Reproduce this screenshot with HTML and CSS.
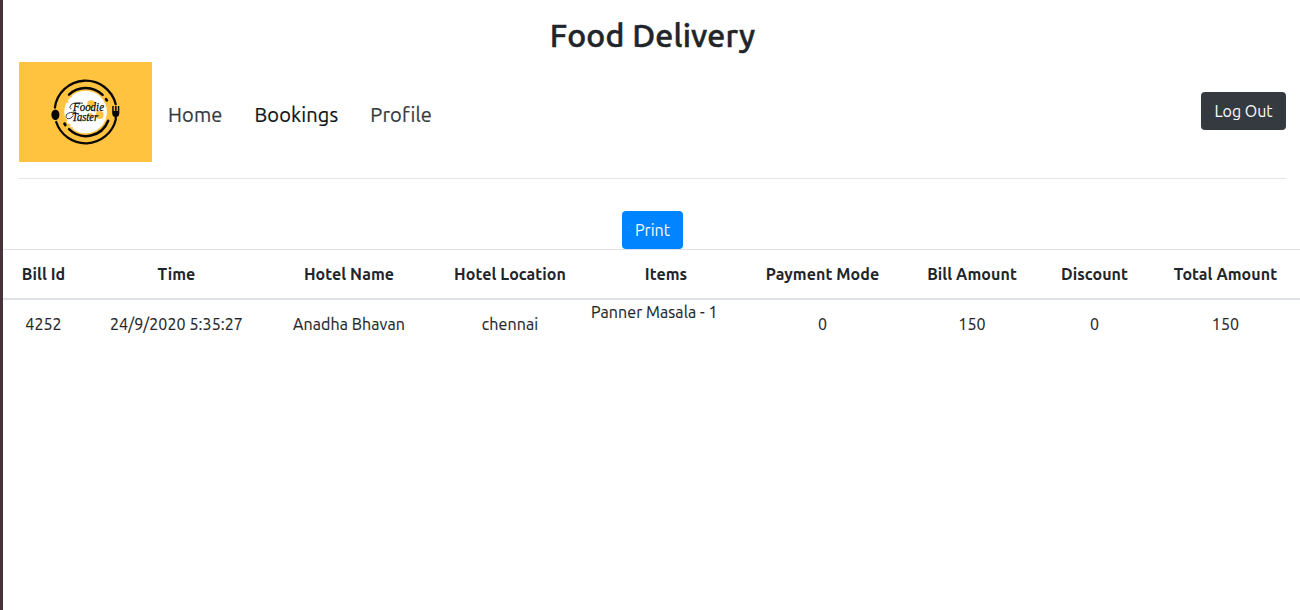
FILE: index.html
```html
<!DOCTYPE html>
<html lang="en">
<head>
<meta charset="utf-8">
<title>Food Delivery</title>
<link rel="stylesheet" href="styles.css">
</head>
<body>
<h2 class="title">Food Delivery</h2>
<header class="navbar">
  <svg class="logo" viewBox="19 62 133 100" role="img" aria-label="Foodie Taster">
    <rect x="19" y="62" width="133" height="100" fill="#ffc340"/>
    <circle cx="85.6" cy="112" r="21.3" fill="#fff"/>
    <g fill="#ffc340">
      <circle cx="91.3" cy="104.2" r="4"/><circle cx="99.6" cy="115" r="4"/><circle cx="90.3" cy="115.5" r="2.4"/>
      <circle cx="68" cy="98" r="1.5"/><circle cx="71" cy="96.5" r="1"/><circle cx="67.5" cy="102" r="1"/>
      <circle cx="69" cy="125" r="1.6"/><circle cx="66" cy="120" r="1.2"/><circle cx="72" cy="128" r="1"/>
    </g>
    <g fill="none" stroke="#090805" stroke-linecap="round">
      <path stroke-width="2.3" d="M54.900 107.500A31 31 0 0 1 115.700 104.200M56.200 122A31 31 0 0 0 115.800 119.500"/>
      <path stroke-width="2.5" d="M69 94.600A24 24 0 0 1 102.600 94.900M69 129.200A24 24 0 0 0 108.200 120.700"/>
      <path stroke-width="2.8" d="M106.100 99.200l.7 1.200M64.600 123.800l.7 1.200"/>
    </g>
    <ellipse cx="55.4" cy="114.8" rx="4" ry="5.3" fill="#090805"/>
    <path fill="#090805" d="M112.200 106h1.500v5h1.200v-5h1.700v5h1.200v-5h1.500v7.500q0 2.800-2.500 3.400v2.200h-2.200v-2.200q-2.400-.6-2.400-3.400z"/>
    <g fill="none" stroke="#090805" stroke-linecap="round" stroke-width=".8">
      <path d="M82.500 103.200q-8-1.200-11.300 1.300q-2.700 3.300-.2 4.500M76 112.500q-6.500-1-9.500 2q-1.500 4 2 4.300q3 0 4.500-3"/>
    </g>
    <g class="logo-text" fill="#090805">
      <text x="73" y="111.200" font-size="12" textLength="31" lengthAdjust="spacingAndGlyphs">Foodie</text>
      <text x="72" y="120.900" font-size="11.500" textLength="26" lengthAdjust="spacingAndGlyphs">Taster</text>
    </g>
  </svg>
  <nav class="nav">
    <a class="link">Home</a>
    <a class="link active">Bookings</a>
    <a class="link">Profile</a>
  </nav>
  <button class="btn btn-dark">Log Out</button>
</header>
<hr class="rule">
<div class="actions"><button class="btn btn-primary">Print</button></div>
<table class="table">
  <colgroup><col class="c-id"><col class="c-time"><col class="c-name"><col class="c-loc"><col class="c-items"><col class="c-pay"><col class="c-bill"><col class="c-disc"><col class="c-total"></colgroup>
  <thead>
    <tr><th>Bill Id</th><th>Time</th><th>Hotel Name</th><th>Hotel Location</th><th>Items</th><th>Payment Mode</th><th>Bill Amount</th><th>Discount</th><th>Total Amount</th></tr>
  </thead>
  <tbody>
    <tr><td>4252</td><td>24/9/2020 5:35:27</td><td>Anadha Bhavan</td><td>chennai</td><td class="items">Panner Masala - 1</td><td>0</td><td>150</td><td>0</td><td>150</td></tr>
  </tbody>
</table>
</body>
</html>
```
FILE: styles.css
```css
* { box-sizing: border-box; }
body {
  margin: 0;
  height: 610px;
  overflow: hidden;
  border-left: 3px solid #48323b;
  background: #fff;
  color: #212529;
  font: 16px/24px Ubuntu, "Noto Sans", sans-serif;
}
.title {
  margin: 0;
  padding: 16px 0 0 2px;
  height: 62px;
  text-align: center;
  font-size: 32px;
  font-weight: 500;
  line-height: 38.4px;
  letter-spacing: 0.2px;
  -webkit-text-stroke: 0.5px #212529;
}
.navbar { display: flex; align-items: center; padding: 0 14px 0 16px; height: 100px; }
.logo { width: 133px; height: 100px; display: block; }
.logo-text { font-family: "Liberation Serif", serif; font-style: italic; font-weight: 400; stroke: #090805; stroke-width: 0.25px; }
.nav { display: flex; gap: 32px; padding: 6px 0 0 16px; flex: 1; }
.link { color: #343a40; font-size: 20px; line-height: 30px; white-space: nowrap; letter-spacing: 0.14px; -webkit-text-stroke: 0.2px; }
.active { color: #101214; }
.btn {
  height: 38px;
  padding: 0;
  border: 0;
  border-radius: 4px;
  color: #fff;
  font: inherit;
}
.btn-dark { width: 85px; background: #343a40; margin-bottom: 2px; }
.btn-primary { width: 61px; background: #0084ff; }
.rule { margin: 16px 14px 0 16px; border: 0; border-top: 1px solid #e5e5e5; }
.actions { display: flex; justify-content: center; padding: 32px 0 0 2px; height: 70px; }
.table { width: 1299px; table-layout: fixed; border-collapse: separate; border-spacing: 0; text-align: center; white-space: nowrap; letter-spacing: 0.08px; }
.table th { height: 51px; padding: 0; border-top: 1px solid #dee2e6; border-bottom: 2px solid #dee2e6; font-weight: 700; }
.table td { height: 48px; padding: 0; -webkit-text-stroke: 0.15px; }
.table .items { text-align: left; vertical-align: top; }
.c-id { width: 81px; }
.c-time { width: 185px; }
.c-name { width: 160px; }
.c-loc { width: 162px; }
.c-items { width: 150px; }
.c-pay { width: 163px; }
.c-bill { width: 136px; }
.c-disc { width: 109px; }
.c-total { width: 153px; }
```
